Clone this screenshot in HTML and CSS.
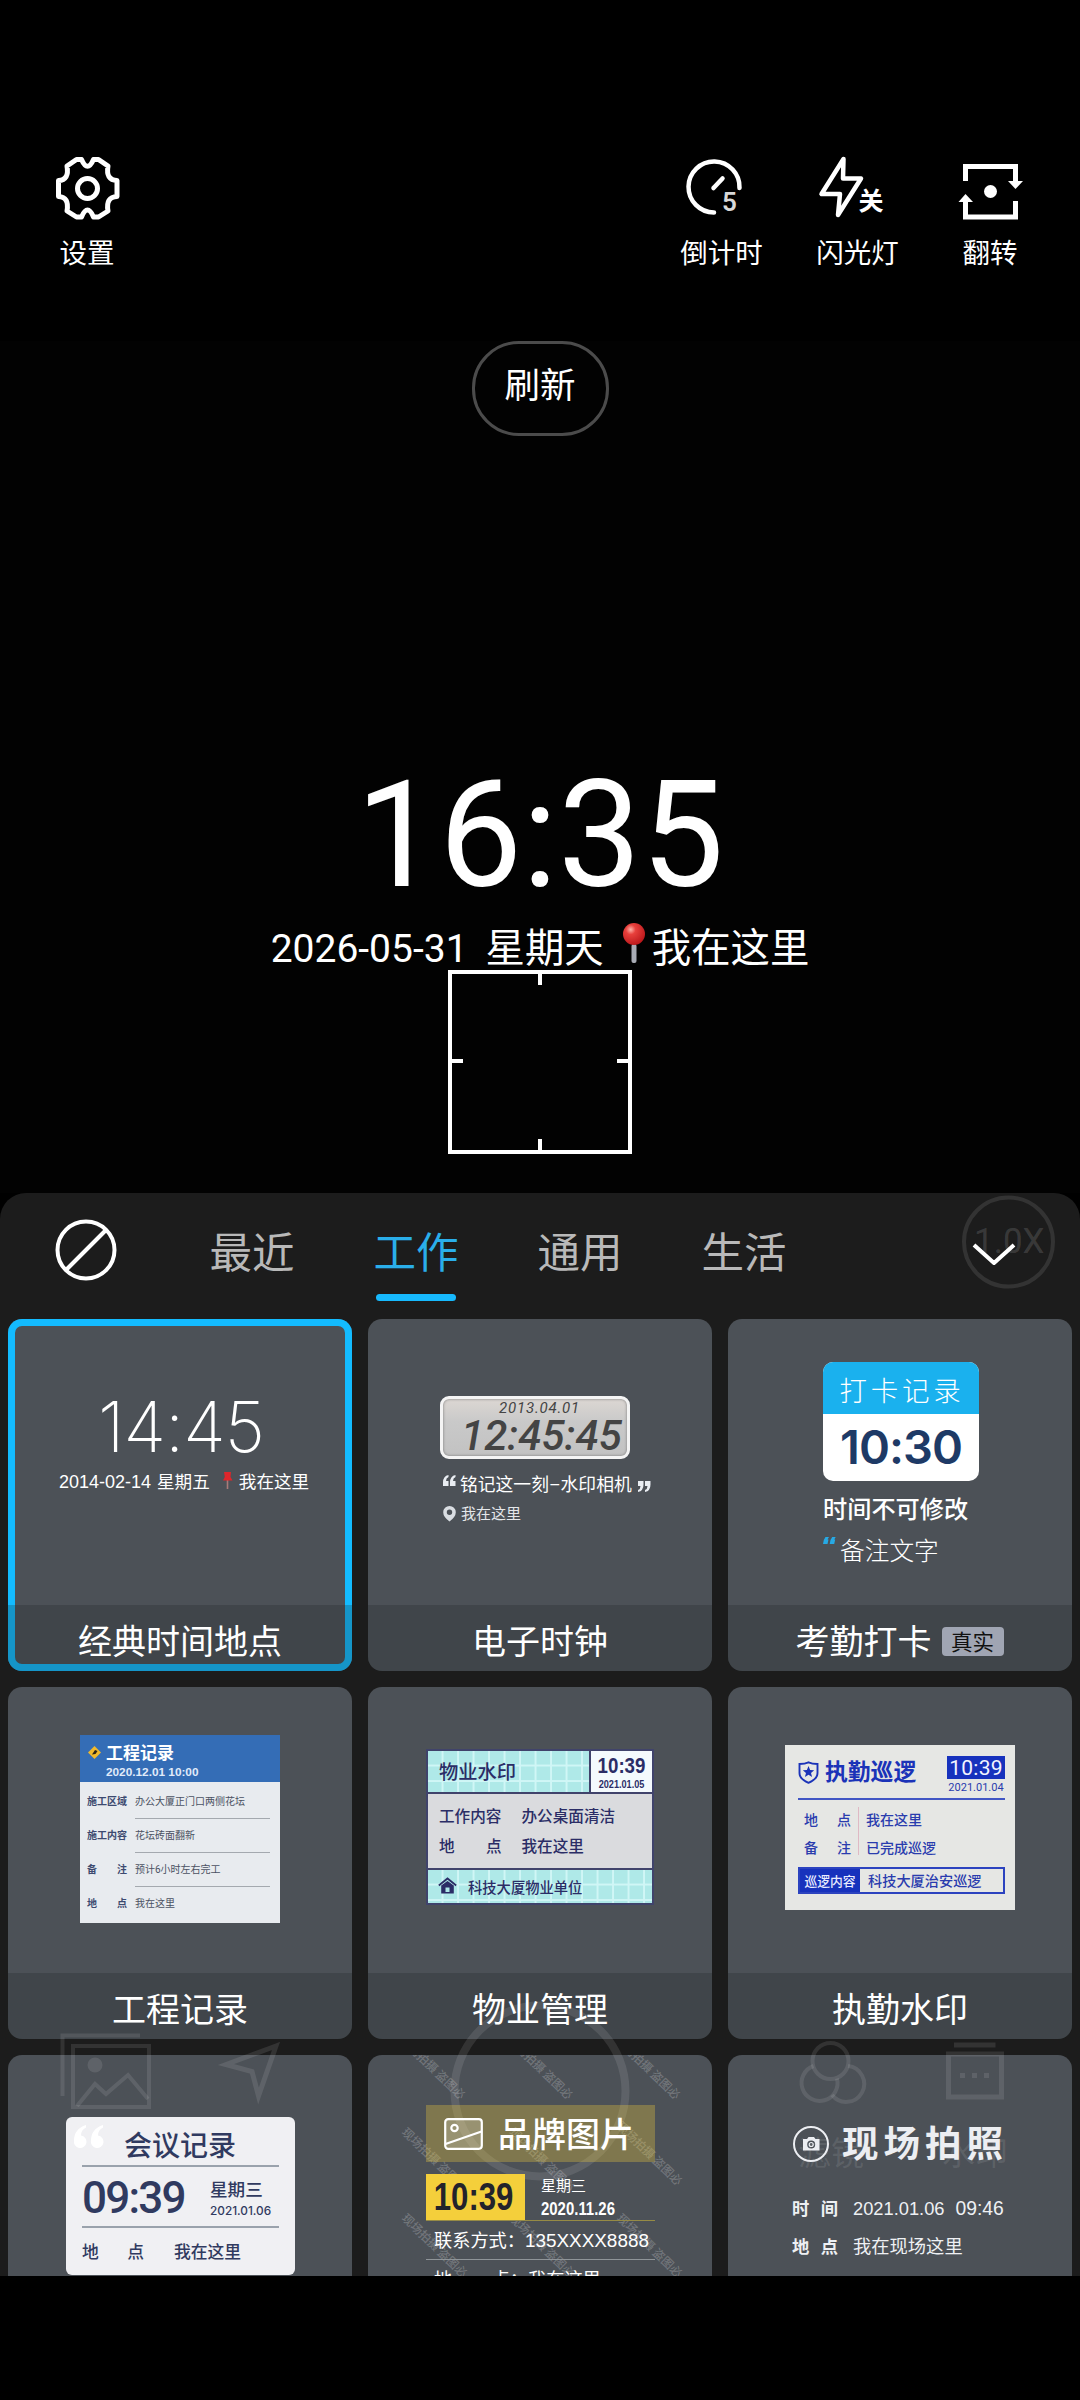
FILE: index.html
```html
<!DOCTYPE html>
<html lang="zh-CN">
<head>
<meta charset="utf-8">
<title>水印相机</title>
<link rel="stylesheet" href="styles.css">
</head>
<body>
<header class="topbar">
  <div class="tool tool-settings">
    <svg class="tool-icon" viewBox="0 0 80 72" fill="none" stroke="#fff" stroke-width="5" stroke-linejoin="round">
      <path d="M29.500 7.500 L34.500 7.500 Q40.500 21 46.500 7.500 L51.500 7.500 L61 14 Q58.500 28 70 28.500 L70 44.500 Q58.500 45 61 59 L51.500 65 L46.500 65 Q40.500 51 34.500 65 L29.500 65 L20 59 Q22.500 45 11.500 44.500 L11.500 28.500 Q22.500 28 20 14 Z"/>
      <circle cx="40.500" cy="36.500" r="10"/>
    </svg>
    <span class="tool-label">设置</span>
  </div>
  <div class="tool tool-timer">
    <svg class="tool-icon" viewBox="0 0 80 72" fill="none" stroke="#fff" stroke-width="4.500" stroke-linecap="round">
      <path d="M57.500 36 A25.500 25.500 0 1 0 32 60.500"/>
      <path d="M31.500 36 L40.500 26.500"/>
      <text class="timer-num" x="40" y="58.500" fill="#d8d8d8" stroke="none">5</text>
    </svg>
    <span class="tool-label">倒计时</span>
  </div>
  <div class="tool tool-flash">
    <svg class="tool-icon" viewBox="0 0 80 72" fill="none" stroke="#fff" stroke-width="4.500" stroke-linejoin="round">
      <path d="M25.500 7 L3.500 42 L22 42 L20 63 L43 26.500 L25 26.500 Z"/>
      <text class="flash-state" x="40.500" y="58" fill="#fff" stroke="none">关</text>
    </svg>
    <span class="tool-label">闪光灯</span>
  </div>
  <div class="tool tool-flip">
    <svg class="tool-icon" viewBox="0 0 80 72" fill="none" stroke="#fff" stroke-width="5">
      <path d="M15.500 29 V14.500 H65.500 V31"/>
      <path d="M65.500 49 V65 H15.500 V47"/>
      <path d="M58 29 H73 L65.500 37 Z M8.500 50 H23 L15.500 42 Z" fill="#fff" stroke="none"/>
      <circle cx="40.500" cy="39.500" r="6.500" fill="#fff" stroke="none"/>
    </svg>
    <span class="tool-label">翻转</span>
  </div>
</header>

<main class="viewfinder">
  <div class="refresh">刷新</div>
  <div class="clock">16:35</div>
  <div class="dateline">
    <span class="date-num">2026-05-31</span>
    <span class="weekday">星期天</span>
    <svg class="pin" viewBox="0 0 24 42">
      <defs>
        <radialGradient id="pinHead" cx=".35" cy=".3" r=".75">
          <stop offset="0" stop-color="#ffb3a8"/><stop offset=".3" stop-color="#e8403c"/><stop offset="1" stop-color="#b9161a"/>
        </radialGradient>
      </defs>
      <rect x="9.500" y="22" width="5" height="19" rx="2" fill="#a9acb5"/>
      <circle cx="12" cy="12" r="11" fill="url(#pinHead)"/>
    </svg>
    <span class="place">我在这里</span>
  </div>
  <svg class="focus" viewBox="0 0 184 184" fill="none" stroke="#fff" stroke-width="4">
    <rect x="2" y="2" width="180" height="180"/>
    <path d="M92 4 V15 M92 169 V180 M4 91 H15 M169 91 H180"/>
  </svg>
</main>

<section class="panel">
  <svg class="ghost" viewBox="0 1193 1080 1083" fill="none" stroke="#fff" stroke-opacity=".1" stroke-width="4">
    <circle cx="1008.500" cy="1242" r="44.500"/>
    <text class="ghost-zoom" x="974" y="1253" fill="#fff" fill-opacity=".14" stroke="none">1.0X</text>
    <path d="M62.500 2096 V2035.500 H140"/>
    <rect x="73" y="2046" width="76" height="61"/>
    <path d="M77 2106 L95 2084 L106 2094 L128 2075 L148 2099"/>
    <circle cx="95" cy="2065" r="7.500" fill="#fff" fill-opacity=".1" stroke="none"/>
    <path d="M276 2046 L226 2064.500 L252 2071.500 L258.500 2096 Z" stroke-width="5"/>
    <circle cx="540" cy="2091" r="85.500" stroke-width="8"/>
    <circle cx="830.500" cy="2061" r="18"/>
    <path d="M813.500 2066 A18 18 0 1 0 837 2078.500"/>
    <path d="M848 2066 A18 18 0 1 1 832 2095"/>
    <rect x="948.500" y="2054" width="53" height="43" stroke-width="5"/>
    <path d="M954 2045 H995.500" stroke-width="5"/>
    <path d="M960 2075.500 h5 M972 2075.500 h5 M984 2075.500 h5" stroke-width="5"/>
    <text class="ghost-label" x="798" y="2165" fill="#fff" fill-opacity=".1" stroke="none">滤镜</text>
    <text class="ghost-label" x="942" y="2165" fill="#fff" fill-opacity=".1" stroke="none">水印</text>
  </svg>

  <nav class="tabs">
    <svg class="none-btn" viewBox="0 0 64 64" fill="none" stroke="#fff" stroke-width="4">
      <circle cx="32" cy="32" r="28.500"/><path d="M52 12 L12 52"/>
    </svg>
    <span class="tab">最近</span>
    <span class="tab tab-active">工作</span>
    <span class="tab">通用</span>
    <span class="tab">生活</span>
    <svg class="chevron" viewBox="0 0 50 32" fill="none" stroke="#fff" stroke-width="4" stroke-linejoin="round">
      <path d="M5 6 L25 24 L45 6"/>
    </svg>
  </nav>

  <div class="grid">
    <article class="card card-selected">
      <div class="thumb t-classic">
        <div class="t-classic-time">14:45</div>
        <div class="t-classic-date">
          <span class="arial">2014-02-14</span><span>星期五</span>
          <svg width="11" height="19" viewBox="0 0 11 19"><path d="M5.500 9 V18" stroke="#aa7a78" stroke-width="1.600"/><path d="M2 1 H9 L8.500 6 L10.500 9.500 H1 L2.800 6 Z" fill="#dd262b"/></svg>
          <span>我在这里</span>
        </div>
      </div>
      <div class="card-label">经典时间地点</div>
    </article>

    <article class="card">
      <div class="thumb t-lcd">
        <div class="lcd">
          <div class="lcd-date">2013.04.01</div>
          <div class="lcd-time">12:45:45</div>
        </div>
        <div class="lcd-quote">
          <svg width="13" height="12" viewBox="0 0 13 12"><path d="M5.500 0 Q0 1 0 7.500 V11 H5.500 V6 H3 Q3 3 5.500 2 Z M12.500 0 Q7 1 7 7.500 V11 H12.500 V6 H10 Q10 3 12.500 2 Z" fill="#e9edf2"/></svg>
          <span>铭记这一刻–水印相机</span>
          <svg class="quote-end" width="13" height="12" viewBox="0 0 13 12"><path d="M0 11 Q5.500 10 5.500 3.500 V0 H0 V5 H2.500 Q2.500 8 0 9 Z M7 11 Q12.500 10 12.500 3.500 V0 H7 V5 H9.500 Q9.500 8 7 9 Z" fill="#e9edf2"/></svg>
        </div>
        <div class="lcd-place">
          <svg width="13" height="16" viewBox="0 0 13 16"><path fill-rule="evenodd" d="M6.500 0 A6.300 6.300 0 0 1 12.800 6.300 Q12.800 11 6.500 15.500 Q.2 11 .2 6.300 A6.300 6.300 0 0 1 6.500 0 Z M6.500 3.600 A2.700 2.700 0 1 0 6.500 9 A2.700 2.700 0 1 0 6.500 3.600 Z" fill="#d9dde2"/></svg>
          <span>我在这里</span>
        </div>
      </div>
      <div class="card-label">电子时钟</div>
    </article>

    <article class="card">
      <div class="thumb t-punch">
        <div class="punch">
          <div class="punch-head">打卡记录</div>
          <div class="punch-time">10:30</div>
        </div>
        <div class="punch-note">时间不可修改</div>
        <div class="punch-remark">
          <svg width="13" height="7" viewBox="0 0 13 7"><path d="M2.500 0 H6 L4.500 2.500 H5.500 L4.500 7 H0 L.8 3 Z M9.200 0 H12.700 L11.200 2.500 H12.200 L11.200 7 H6.700 L7.500 3 Z" fill="#27a9e4"/></svg>
          <span>备注文字</span>
        </div>
      </div>
      <div class="card-label">考勤打卡<span class="badge">真实</span></div>
    </article>

    <article class="card">
      <div class="thumb t-eng">
        <div class="eng">
          <div class="eng-head">
            <svg width="13" height="13" viewBox="0 0 13 13"><path d="M6.500 0 L13 6.500 L6.500 13 L0 6.500 Z" fill="#f1b92c"/><path d="M4 8.500 L7 4 L9.500 5 L7.500 8 Z" fill="#2a2418"/></svg>
            <div><div class="eng-title">工程记录</div><div class="eng-date">2020.12.01 10:00</div></div>
          </div>
          <div class="eng-row"><b>施工区域</b><span>办公大厦正门口两侧花坛</span></div>
          <div class="eng-row"><b>施工内容</b><span>花坛砖面翻新</span></div>
          <div class="eng-row"><b><i>备</i><i>注</i></b><span>预计6小时左右完工</span></div>
          <div class="eng-row"><b><i>地</i><i>点</i></b><span>我在这里</span></div>
        </div>
      </div>
      <div class="card-label">工程记录</div>
    </article>

    <article class="card">
      <div class="thumb t-prop">
        <div class="prop">
          <div class="prop-head">
            <div class="prop-title">物业水印</div>
            <div class="prop-when"><div class="prop-time">10:39</div><div class="prop-date">2021.01.05</div></div>
          </div>
          <div class="prop-body">
            <div class="prop-row"><b>工作内容</b><span>办公桌面清洁</span></div>
            <div class="prop-row"><b><i>地</i><i>点</i></b><span>我在这里</span></div>
          </div>
          <div class="prop-foot">
            <svg width="19" height="17" viewBox="0 0 19 17"><path d="M.8 8.500 L9.500 1.500 L18.200 8.500" fill="none" stroke="#2b2d66" stroke-width="1.800"/><path fill-rule="evenodd" d="M3.200 8.500 L9.500 4 L15.800 8.500 V16.500 H3.200 Z M7.500 10.500 V15 H11.500 V10.500 Z" fill="#2b2d66"/></svg>
            <span>科技大厦物业单位</span>
          </div>
        </div>
      </div>
      <div class="card-label">物业管理</div>
    </article>

    <article class="card">
      <div class="thumb t-duty">
        <div class="duty">
          <div class="duty-head">
            <svg width="21" height="23" viewBox="0 0 21 23"><path d="M10.500 1.300 Q14 3 19.500 3 V12 Q19.500 18 10.500 21.800 Q1.500 18 1.500 12 V3 Q7 3 10.500 1.300 Z" fill="none" stroke="#1b33b8" stroke-width="1.900"/><path d="M10.500 5 L12.100 9 L16.200 9.200 L13 11.900 L14.100 16 L10.500 13.700 L6.900 16 L8 11.900 L4.800 9.200 L8.900 9 Z" fill="#1b33b8"/></svg>
            <span class="duty-title">执勤巡逻</span>
            <div class="duty-when"><div class="duty-time">10:39</div><div class="duty-date">2021.01.04</div></div>
          </div>
          <div class="duty-body">
            <div class="duty-keys"><b><i>地</i><i>点</i></b><b><i>备</i><i>注</i></b></div>
            <div class="duty-vals"><span>我在这里</span><span>已完成巡逻</span></div>
          </div>
          <div class="duty-foot"><b>巡逻内容</b><span>科技大厦治安巡逻</span></div>
        </div>
      </div>
      <div class="card-label">执勤水印</div>
    </article>

    <article class="card card-cut">
      <div class="thumb t-meet">
        <div class="meet">
          <div class="meet-title">
            <svg class="meet-quote" width="30" height="24" viewBox="0 0 30 24"><path d="M12 0 Q0 4 0 15.500 A6.300 6.300 0 1 0 7 10.500 Q7 5 12 2.500 Z M29 0 Q17 4 17 15.500 A6.300 6.300 0 1 0 24 10.500 Q24 5 29 2.500 Z" fill="#fff"/></svg>
            会议记录
          </div>
          <div class="meet-mid">
            <div class="meet-time">09:39</div>
            <div><div class="meet-week">星期三</div><div class="meet-date">2021.01.06</div></div>
          </div>
          <div class="meet-place"><b><i>地</i><i>点</i></b><span>我在这里</span></div>
        </div>
      </div>
    </article>

    <article class="card card-cut">
      <div class="thumb t-brand">
        <svg class="brand-marks" viewBox="0 0 344 221" fill="#fff" fill-opacity=".22">
          <g transform="translate(31 -14)"><text transform="rotate(44)">现场拍摄 盗图必</text></g>
          <g transform="translate(138.500 -14)"><text transform="rotate(44)">现场拍摄 盗图必</text></g>
          <g transform="translate(246 -14)"><text transform="rotate(44)">现场拍摄 盗图必</text></g>
          <g transform="translate(33 78)"><text transform="rotate(44)">现场拍摄 盗图必</text></g>
          <g transform="translate(140.500 78)"><text transform="rotate(44)">现场拍摄 盗图必</text></g>
          <g transform="translate(248 72)"><text transform="rotate(44)">现场拍摄 盗图必</text></g>
          <g transform="translate(33 164)"><text transform="rotate(44)">现场拍摄 盗图必</text></g>
          <g transform="translate(140.500 164)"><text transform="rotate(44)">现场拍摄 盗图必</text></g>
          <g transform="translate(248 164)"><text transform="rotate(44)">现场拍摄 盗图必</text></g>
        </svg>
        <div class="brand">
          <div class="brand-head">
            <svg width="39" height="32" viewBox="0 0 39 32" fill="none" stroke="#fff" stroke-width="2.200"><rect x="1.200" y="1.200" width="36.600" height="29.600" rx="3" fill="#fff" fill-opacity=".2"/><circle cx="10.500" cy="10" r="3.200"/><path d="M1.500 26 L37.500 13.500"/></svg>
            <span>品牌图片</span>
          </div>
          <div class="brand-when">
            <div class="brand-time"><span>10:39</span></div>
            <div class="brand-day"><div class="brand-week">星期三</div><div class="brand-date">2020.11.26</div></div>
          </div>
          <div class="brand-line">联系方式：<span class="arial">135XXXX8888</span></div>
          <div class="brand-line brand-last"><b><i>地</i><i>点：</i></b><span>我在这里</span></div>
        </div>
      </div>
    </article>

    <article class="card card-cut">
      <div class="thumb t-site">
        <div class="site-title">
          <svg width="38" height="38" viewBox="0 0 38 38"><circle cx="19" cy="19" r="17" fill="none" stroke="#eceef2" stroke-width="2"/><path fill-rule="evenodd" d="M11 14 H15 L16.500 12 H22 L23.500 14 H27.500 V25.500 H11 Z M19.200 15.500 A4 4 0 1 0 19.200 23.500 A4 4 0 1 0 19.200 15.500 Z" fill="#eceef2"/><circle cx="19.200" cy="19.500" r="2" fill="none" stroke="#eceef2" stroke-width="1.200"/></svg>
          <span>现场拍照</span>
        </div>
        <div class="site-row"><b><i>时</i><i>间</i></b><span class="arial">2021.01.06</span><span class="arial site-clock">09:46</span></div>
        <div class="site-row"><b><i>地</i><i>点</i></b><span>我在现场这里</span></div>
      </div>
    </article>
  </div>
</section>
</body>
</html>
```
FILE: styles.css
```css
* { box-sizing: border-box; }

body {
  margin: 0;
  width: 1080px;
  height: 2400px;
  overflow: hidden;
  background: #000;
  color: #fff;
  font-family: Roboto, "Noto Sans CJK SC", sans-serif;
}

svg { display: block; flex: none; }
i { font-style: normal; }
b { font-weight: 500; display: inline-flex; justify-content: space-between; }
.arial { font-family: "Liberation Sans", "Noto Sans CJK SC", sans-serif; }

/* Camera tools */
.topbar { display: flex; height: 341px; padding: 152px 25px 0 19px; }
.tool { display: flex; flex-direction: column; align-items: center; }
.tool-settings { width: 136px; margin-right: auto; }
.tool-timer { width: 137px; }
.tool-flash { width: 135px; }
.tool-flip { width: 130px; }
.tool-icon { width: 80px; height: 72px; }
.tool-label { margin-top: 12px; font-size: 27.500px; line-height: 35px; }
.timer-num { font: 600 26px Roboto, sans-serif; }
.flash-state { font: 700 25px "Noto Sans CJK SC", sans-serif; }

/* Camera preview */
.viewfinder { display: flex; flex-direction: column; align-items: center; height: 852px; background: #020202; }
.refresh {
  width: 137px; height: 95px;
  border: 3px solid #4b4b4b; border-radius: 47px;
  font-size: 35.500px; line-height: 85px; text-align: center;
}
.clock { margin-top: 325px; font-size: 148px; line-height: 150px; }
.dateline { display: flex; height: 44px; margin-top: 15px; font-size: 39.400px; line-height: 46px; }
.date-num { font-size: 39px; }
.weekday { margin-left: 18px; }
.pin { width: 24px; height: 42px; margin: -4px 6px 0 18px; }
.focus { width: 184px; height: 184px; }

/* Watermark picker */
.panel {
  position: relative;
  height: 1083px;
  overflow: hidden;
  border-radius: 26px 26px 0 0;
  background: #1c1c1c;
}
.ghost { position: absolute; inset: 0; z-index: 1; width: 1080px; height: 1083px; }
.ghost-zoom { font: 35px Roboto, sans-serif; }
.ghost-label { font: 33px "Noto Sans CJK SC", sans-serif; }

.tabs { position: relative; z-index: 2; display: flex; height: 126px; padding-left: 54px; }
.none-btn { width: 64px; height: 64px; margin: 25px 52px 0 0; }
.tab { width: 164px; padding-top: 38px; font-size: 42.500px; line-height: 46px; text-align: center; color: #b9b9b9; }
.tab-active { color: #2aaeea; }
.tab-active::after { content: ""; display: block; width: 80px; height: 7px; margin: 17px auto 0; border-radius: 4px; background: #17b9fd; }
.chevron { width: 50px; height: 32px; margin: 46px 0 0 143px; }

.grid { display: grid; grid-template-columns: repeat(3, 344px); gap: 16px; padding: 0 8px; }
.card { height: 352px; overflow: hidden; border-radius: 14px; background: #4c5157; }
.card-selected { box-shadow: inset 0 0 0 7px #13bbff; }
.card-cut { height: 221px; border-radius: 14px 14px 0 0; }
.thumb { position: relative; z-index: 2; height: 286px; }
.card-cut .thumb { height: 221px; overflow: hidden; }
.card-label {
  display: flex; justify-content: center; align-items: center;
  height: 66px; padding-top: 7px;
  background: rgba(28, 35, 34, .25);
  font-size: 34px; line-height: 46px;
}
.badge { width: 62px; height: 29px; margin: 0 1px 0 10px; border-radius: 4px; background: #a0a5b3; color: #111; font-size: 21.500px; line-height: 32px; text-align: center; }

/* Classic time and place */
.t-classic { padding-top: 73px; }
.t-classic-time { padding-left: 2px; font: 250 69.500px/70px Inter, sans-serif; text-align: center; letter-spacing: -1px; }
.t-classic-date { display: flex; padding: 9px 0 0 51px; font-size: 17.600px; line-height: 22px; }
.t-classic-date .arial { width: 98px; font-size: 18px; }
.t-classic-date svg { margin: 0 6px 0 12px; }

/* Digital clock */
.t-lcd { padding: 77px 0 0 72px; }
.lcd { width: 190px; height: 63px; border: 3px solid #f4f4f4; border-radius: 9px; background: linear-gradient(#dcd7d3, #c9c9c9 40%, #c2c2c2); box-shadow: inset 0 0 3px #777; color: #444; font-style: italic; }
.lcd-date { padding: 2px 0 0 56px; font-size: 15px; line-height: 15px; letter-spacing: .8px; }
.lcd-time { padding-left: 18px; font-size: 42px; font-weight: 500; line-height: 39px; }
.lcd-quote { display: flex; padding-top: 12px; height: 37px; font-size: 17.800px; line-height: 27px; }
.lcd-quote svg { margin: 4px 4px 0 3px; }
.lcd-quote .quote-end { margin: 10px 0 0 6px; }
.lcd-place { display: flex; padding-top: 8px; font-size: 15px; line-height: 20px; color: #e4e7ea; }
.lcd-place svg { margin: 2px 5px 0 3px; }

/* Attendance */
.t-punch { padding: 43px 0 0 95px; }
.punch { width: 156px; height: 119px; overflow: hidden; border-radius: 10px; background: #fff; text-align: center; }
.punch-head { height: 52px; padding-left: 2px; background: #1ab1ee; font-size: 27.500px; font-weight: 300; line-height: 60px; letter-spacing: 3.800px; }
.punch-time { color: #1e3a66; font: 600 47px/66px Inter, sans-serif; letter-spacing: -1px; }
.punch-note { margin-top: 15px; font-size: 24.200px; font-weight: 500; line-height: 28px; }
.punch-remark { display: flex; gap: 4px; margin-top: 13px; font-size: 24.700px; font-weight: 300; line-height: 29px; }

/* Engineering record */
.t-eng { padding: 48px 0 0 72px; }
.eng { width: 200px; height: 188px; background: #e8ebef; color: #4b5263; font-size: 10px; line-height: 14px; }
.eng-head { display: flex; gap: 5px; height: 47px; margin-bottom: 3px; padding: 8px 0 0 8px; background: #346db6; color: #fff; }
.eng-head svg { margin-top: 3px; }
.eng-title { font-size: 17px; font-weight: 700; line-height: 20px; }
.eng-date { font: 700 11.800px/18px "Liberation Sans", sans-serif; color: #e1ebfa; }
.eng-row { display: flex; height: 34px; padding-left: 7px; }
.eng-row b { width: 40px; margin: 10px 8px 0 0; color: #3d4a70; font-weight: 700; }
.eng-row span { width: 135px; padding-top: 10px; border-bottom: 1.500px solid #a4a9af; white-space: nowrap; }
.eng-row:last-child span { border: 0; }

/* Property management */
.t-prop { padding: 62px 0 0 58px; }
.prop { width: 228px; height: 156px; border: 2px solid #40436b; background: #dadbde; color: #2b2d66; }
.prop-head { display: flex; height: 43px; border-bottom: 2px solid #40436b; }
.prop-title, .prop-foot {
  background-color: #afe9e8;
  background-image: linear-gradient(90deg, transparent 14px, #d0f6f6 14px), linear-gradient(transparent 14px, #d0f6f6 14px);
  background-size: 15.500px 15.500px;
}
.prop-title { width: 163px; padding-left: 11px; border-right: 2px solid #40436b; font-size: 19.300px; font-weight: 500; line-height: 43px; }
.prop-when { flex: 1; background: #f4fafd; text-align: center; font-family: "Liberation Sans", sans-serif; font-weight: 700; }
.prop-time { padding-top: 3px; font-size: 22.500px; line-height: 24px; transform: scaleX(.83); }
.prop-date { font-size: 10.500px; line-height: 12px; transform: scaleX(.87); }
.prop-body { height: 76px; padding: 8px 0 0 11px; border-bottom: 2px solid #40436b; font-size: 15.600px; font-weight: 500; }
.prop-row { display: flex; gap: 20px; line-height: 30px; }
.prop-row b { width: 62.500px; }
.prop-foot { display: flex; gap: 11px; height: 33px; padding-left: 10px; font-size: 14.300px; font-weight: 500; line-height: 36px; }
.prop-foot svg { margin-top: 7px; }

/* Patrol */
.t-duty { padding: 58px 0 0 57px; }
.duty { width: 230px; height: 165px; padding: 11px 10px 0 13px; background: #e6e7e4; color: #2a3cae; }
.duty-head { display: flex; height: 44px; border-bottom: 2px solid #4156c4; }
.duty-head svg { margin-top: 5px; }
.duty-title { margin: 0 auto 0 6px; font-size: 22.800px; font-weight: 700; line-height: 34px; color: #1b33b8; }
.duty-when { width: 58px; text-align: center; }
.duty-time { height: 23px; background: #1732bd; color: #f2f4ff; font-size: 21px; line-height: 24px; letter-spacing: .2px; }
.duty-date { font-size: 11px; line-height: 17px; white-space: nowrap; }
.duty-body { display: flex; height: 67px; padding: 7px 0 0 6px; font-size: 14px; font-weight: 500; line-height: 27.500px; }
.duty-keys { display: flex; flex-direction: column; width: 55px; height: 48px; padding-right: 7px; border-right: 1px solid #dfb9c4; }
.duty-vals { display: flex; flex-direction: column; padding-left: 7px; }
.duty-foot { display: flex; height: 27px; border: 2px solid #2c43bf; font-size: 14.200px; font-weight: 500; line-height: 25px; }
.duty-foot b { justify-content: center; width: 60px; margin-right: 8px; background: #1732bd; color: #e9ecff; font-size: 12.800px; }

/* Meeting record */
.t-meet { padding: 62px 0 0 58px; }
.meet { width: 229px; height: 158px; padding: 0 16px; border-radius: 6px; background: #f0f0f3; color: #303a60; }
.meet-title { display: flex; height: 50px; border-bottom: 2px solid #9aa2ac; font-size: 28px; font-weight: 500; line-height: 59px; }
.meet-quote { margin: 8px 20px 0 -8px; }
.meet-mid { display: flex; justify-content: space-between; height: 61px; padding: 11px 0 0; border-bottom: 2px solid #9aa2ac; }
.meet-time { font-size: 44px; font-weight: 500; line-height: 40px; letter-spacing: -1.800px; }
.meet-mid > div:last-child { width: 69px; }
.meet-week { font-size: 17.600px; font-weight: 500; line-height: 24px; }
.meet-date { font: 500 11.800px/19px Inter, sans-serif; }
.meet-place { display: flex; gap: 30px; font-size: 16.800px; font-weight: 500; line-height: 49px; }
.meet-place b { width: 62px; }

/* Brand picture */
.brand-marks { position: absolute; inset: 0; width: 344px; height: 221px; font: 500 11.800px "Noto Sans CJK SC", sans-serif; }
.t-brand { padding: 50px 0 0 58px; }
.brand { width: 229px; position: relative; }
.brand-head { display: flex; gap: 15px; height: 57px; padding-left: 18px; background: rgba(245, 208, 60, .3); font-size: 34px; font-weight: 500; line-height: 60px; }
.brand-head svg { margin-top: 13px; }
.brand-when { display: flex; height: 47px; margin-top: 12px; border-bottom: 1.500px solid #968b45; font-family: "Liberation Sans", "Noto Sans CJK SC", sans-serif; }
.brand-time { display: flex; justify-content: center; width: 99px; height: 46px; background: #f4cf3b; color: #23232b; font-size: 38px; font-weight: 700; line-height: 47px; }
.brand-time span { margin: 0 -4px; transform: translateX(-2px) scaleX(.82); }
.brand-day { padding-left: 16px; }
.brand-week { font: 15px/25px Roboto, "Noto Sans CJK SC", sans-serif; }
.brand-date { font-size: 18px; font-weight: 700; line-height: 20px; transform: scaleX(.83); transform-origin: left; }
.brand-line { height: 39px; padding-left: 8px; border-bottom: 1px solid #8f9498; font-size: 18.200px; line-height: 40px; white-space: nowrap; }
.brand-line .arial { font-size: 18.900px; }
.brand-last b { width: 94px; font-weight: 400; }

/* On-site photo */
.t-site { padding: 64px 0 0 64px; }
.site-title { display: flex; gap: 12px; height: 68px; color: #eceef2; font-size: 36.500px; font-weight: 700; line-height: 52px; letter-spacing: 5px; }
.site-title svg { margin-top: 6px; }
.site-row { display: flex; height: 37.500px; font-size: 18.300px; line-height: 44px; color: #eef0f3; }
.site-row b { width: 46px; margin-right: 15px; font-size: 17.300px; font-weight: 700; }
.site-clock { margin-left: 11px; font-size: 19.300px; }
```
